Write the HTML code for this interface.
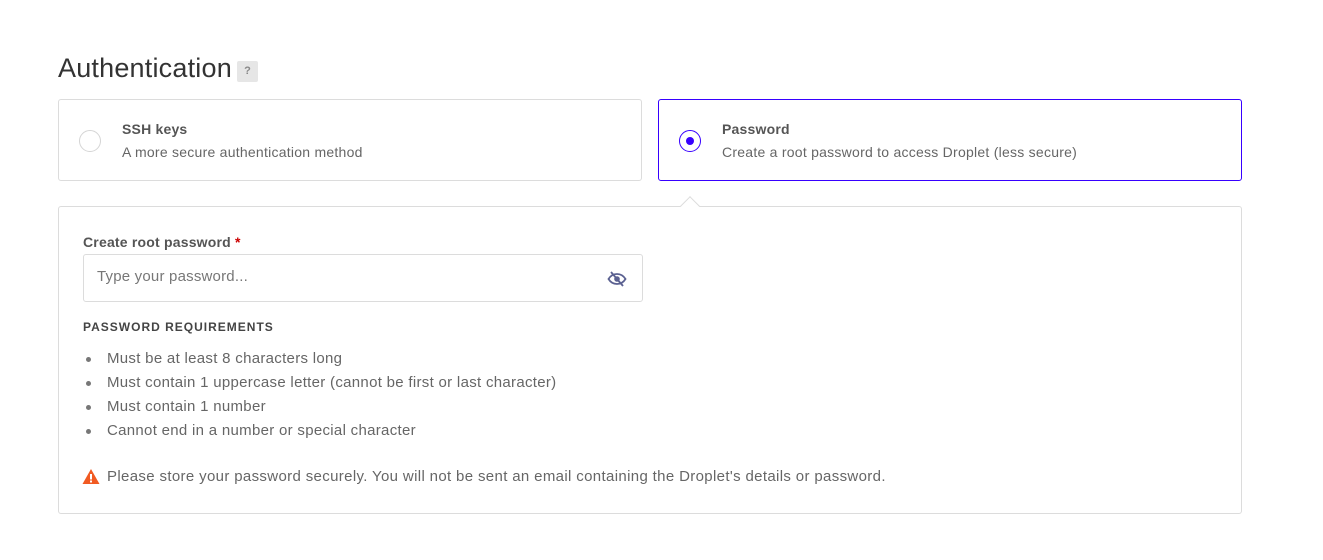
<!DOCTYPE html>
<html><head><meta charset="utf-8"><style>
*{box-sizing:border-box;margin:0;padding:0}
body{width:1323px;height:560px;background:#fff;font-family:"Liberation Sans",sans-serif;color:#4d5b7c;position:relative;overflow:hidden}
.abs{position:absolute}
h1{position:absolute;left:58px;top:53px;font-size:27px;font-weight:400;color:#333;letter-spacing:0.2px}
.q{position:absolute;left:237px;top:61px;width:21px;height:21px;background:#e6e6e6;border-radius:2px;color:#888;font-size:11px;text-align:center;line-height:21px;font-weight:bold}
.card{position:absolute;top:99px;height:82px;width:584px;border:1px solid #dcdcdc;border-radius:3px}
.card.sel{border-color:#3700ff}
.radio{position:absolute;left:20px;top:30px;width:22px;height:22px;border-radius:50%;border:1px solid #d5d5d5}
.sel .radio{border-color:#3700ff}
.sel .radio:after{content:"";position:absolute;left:6px;top:6px;width:8px;height:8px;border-radius:50%;background:#3700ff}
.t{position:absolute;left:63px;top:21px;font-size:14px;font-weight:bold;color:#555;letter-spacing:0.2px}
.s{position:absolute;left:63px;top:44px;font-size:14px;color:#666;letter-spacing:0.25px}
.panel{position:absolute;left:58px;top:206px;width:1184px;height:308px;border:1px solid #dcdcdc;border-radius:3px}
.arrow{position:absolute;left:683px;top:199px;width:14px;height:14px;background:#fff;border-left:1px solid #dcdcdc;border-top:1px solid #dcdcdc;transform:rotate(45deg)}
.lbl{position:absolute;left:83px;top:234px;font-size:14px;font-weight:bold;color:#555;letter-spacing:0.2px}
.lbl span{color:#c00}
.inp{position:absolute;left:83px;top:254px;width:560px;height:48px;border:1px solid #dcdcdc;border-radius:3px}
.ph{position:absolute;left:13px;top:13px;font-size:15px;color:#777;letter-spacing:0.2px}
.rh{position:absolute;left:83px;top:320px;font-size:12px;font-weight:bold;letter-spacing:1px;color:#444}
ul{position:absolute;left:107px;top:347px;list-style:none;font-size:15px;color:#666;line-height:24px;letter-spacing:0.3px}
ul li{position:relative}
ul li:before{content:"";position:absolute;left:-21px;top:10px;width:5px;height:5px;border-radius:50%;background:#777}
.warn{position:absolute;left:107px;top:468px;font-size:15px;color:#666;letter-spacing:0.35px}
</style></head><body>
<h1>Authentication</h1><div class="q">?</div>
<div class="card" style="left:58px"><div class="radio"></div><div class="t">SSH keys</div><div class="s">A more secure authentication method</div></div>
<div class="card sel" style="left:658px"><div class="radio"></div><div class="t">Password</div><div class="s">Create a root password to access Droplet (less secure)</div></div>
<div class="panel"></div>
<div class="arrow"></div>
<div class="lbl">Create root password <span>*</span></div>
<div class="inp"><div class="ph">Type your password...</div>
<svg class="abs" style="left:523px;top:15px" width="20" height="18" viewBox="0 0 20 18"><path d="M1.5 9C4 5 7 4 10 4s6 1 8.5 5C16 13 13 14 10 14S4 13 1.5 9z" fill="none" stroke="#5b6191" stroke-width="1.8"/><circle cx="10" cy="9" r="2.8" fill="#5b6191"/><path d="M4 2L16 16" stroke="#5b6191" stroke-width="1.8"/></svg></div>
<div class="rh">PASSWORD REQUIREMENTS</div>
<ul><li>Must be at least 8 characters long</li><li>Must contain 1 uppercase letter (cannot be first or last character)</li><li>Must contain 1 number</li><li>Cannot end in a number or special character</li></ul>
<svg class="abs" style="left:82px;top:468px" width="18" height="17" viewBox="0 0 18 17"><path d="M9 1L17.5 16H0.5z" fill="#f15a22"/><rect x="8" y="6" width="2" height="5.5" fill="#fff"/><rect x="8" y="12.5" width="2" height="2" fill="#fff"/></svg>
<div class="warn">Please store your password securely. You will not be sent an email containing the Droplet's details or password.</div>
</body></html>
